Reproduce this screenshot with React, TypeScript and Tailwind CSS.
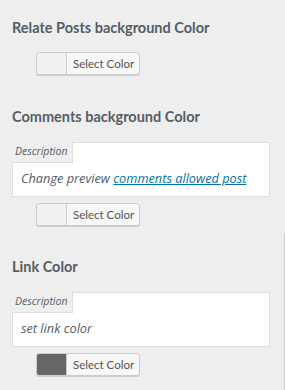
import React from "react";

const FONT = "font-['Lato','Open_Sans',sans-serif]";
const DESC_FONT = "font-['Open_Sans','Noto_Sans',sans-serif]";

function ColorButton({ swatch }: { swatch?: string }) {
  return (
    <button
      type="button"
      className="ml-[24px] flex h-[23px] w-[104px] items-stretch overflow-hidden rounded-[3px] border border-[#cccccc] bg-[#f7f7f7] shadow-[0_1px_0_#cccccc] p-0"
    >
      <span
        className="w-[30px] shrink-0 border-r border-[#cccccc]"
        style={{ background: swatch ?? "#f1f1f1" }}
      />
      <span className="flex-1 whitespace-nowrap pl-[6px] text-left text-[11.5px] font-normal leading-[21px] text-[#555555]">
        Select Color
      </span>
    </button>
  );
}

function Description({ children }: { children: React.ReactNode }) {
  return (
    <div className={`${DESC_FONT} mt-[15px] h-[55px] w-[258px] border border-[#dddddd] bg-white`}>
      <div className="-ml-px -mt-px h-[21px] w-[61px] whitespace-nowrap border-r border-b border-[#dddddd] bg-[#eeeeee] pl-[3px] text-[10.5px] italic leading-[19px] text-[#555d66]">
        Description
      </div>
      <p className="whitespace-nowrap pl-[8px] pt-[5px] text-[12.75px] italic leading-[20px] text-[#555d66]">
        {children}
      </p>
    </div>
  );
}

function Heading({ children }: { children: React.ReactNode }) {
  return (
    <h3 className="text-[14.5px] font-bold leading-[20px] text-[#555d66]">
      {children}
    </h3>
  );
}

export default function App() {
  return (
    <div className={`${FONT} h-[390px] w-[285px] overflow-hidden bg-[#eeeeee]`}>
      <div className="px-[12px] pt-[18px]">
        <Heading>Relate Posts background Color</Heading>
        <div className="mt-[14px]">
          <ColorButton />
        </div>
      </div>

      <div className="px-[12px] pt-[32px]">
        <Heading>Comments background Color</Heading>
        <Description>
          Change preview{" "}
          <a href="#" className="text-[#0073aa] underline">
            comments allowed post
          </a>
        </Description>
        <div className="mt-[6px]">
          <ColorButton />
        </div>
      </div>

      <div className="mt-[7px] h-[200px] border-r border-[#cfcfcf] px-[12px] pt-[24px]">
        <Heading>Link Color</Heading>
        <Description>set link color</Description>
        <div className="mt-[6px]">
          <ColorButton swatch="#666666" />
        </div>
      </div>
    </div>
  );
}
